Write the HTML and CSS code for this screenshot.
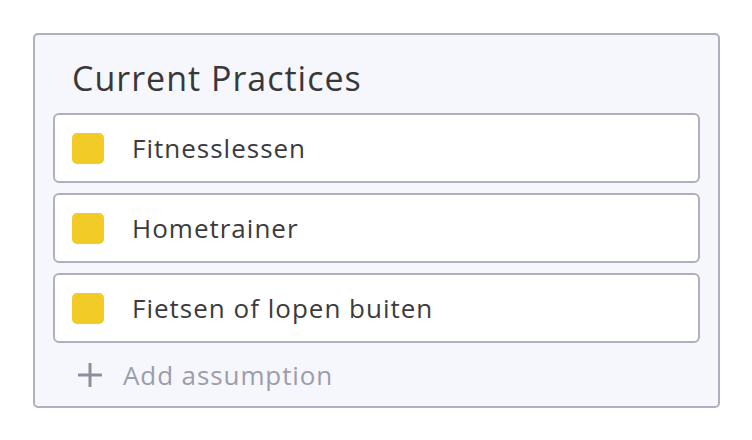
FILE: index.html
```html
<!DOCTYPE html>
<html>
<head>
<meta charset="utf-8">
<link rel="stylesheet" href="styles.css">
</head>
<body>
<section class="panel">
  <h2 class="title">Current Practices</h2>
  <ul class="list">
    <li class="item"><span class="swatch"></span><span class="label">Fitnesslessen</span></li>
    <li class="item"><span class="swatch"></span><span class="label">Hometrainer</span></li>
    <li class="item"><span class="swatch"></span><span class="label">Fietsen of lopen buiten</span></li>
  </ul>
  <div class="add">
    <svg class="plus" width="24" height="24" viewBox="0 0 24 24"><path d="M12 1v22M1 12h22" stroke="#8e8d9b" stroke-width="3" stroke-linecap="round" fill="none"/></svg>
    <span class="add-label">Add assumption</span>
  </div>
</section>
</body>
</html>
```
FILE: styles.css
```css
html, body {
  margin: 0;
  padding: 0;
  background: #ffffff;
}
body {
  padding: 33px 0 0 33px;
  font-family: "Open Sans", "Lato", sans-serif;
  color: #3b3b3d;
}
.panel {
  box-sizing: border-box;
  width: 687px;
  height: 375px;
  background: #f6f7fc;
  border: 2px solid #b0afc2;
  border-radius: 5px;
  padding: 0 18px;
}
.title {
  margin: 0;
  height: 78px;
  box-sizing: border-box;
  padding: 23px 0 0 19px;
  font-size: 34px;
  font-weight: 400;
  line-height: 40px;
  letter-spacing: 1px;
  color: #38383a;
}
.list {
  list-style: none;
  margin: 0;
  padding: 0;
  display: flex;
  flex-direction: column;
  gap: 10px;
}
.item {
  box-sizing: border-box;
  height: 70px;
  background: #ffffff;
  border: 2px solid #b0afc2;
  border-radius: 6px;
  display: flex;
  align-items: center;
  padding-left: 17px;
}
.swatch {
  width: 32px;
  height: 31px;
  border-radius: 5px;
  background: #f2cb26;
  flex: none;
}
.label {
  margin-left: 28px;
  font-size: 26px;
  letter-spacing: 1px;
  color: #3b3b3d;
}
.add {
  display: flex;
  align-items: center;
  height: 64px;
  padding-left: 25px;
}
.plus {
  flex: none;
}
.add-label {
  margin-left: 21px;
  font-size: 26px;
  letter-spacing: 0.9px;
  color: #9d9cab;
}
```
